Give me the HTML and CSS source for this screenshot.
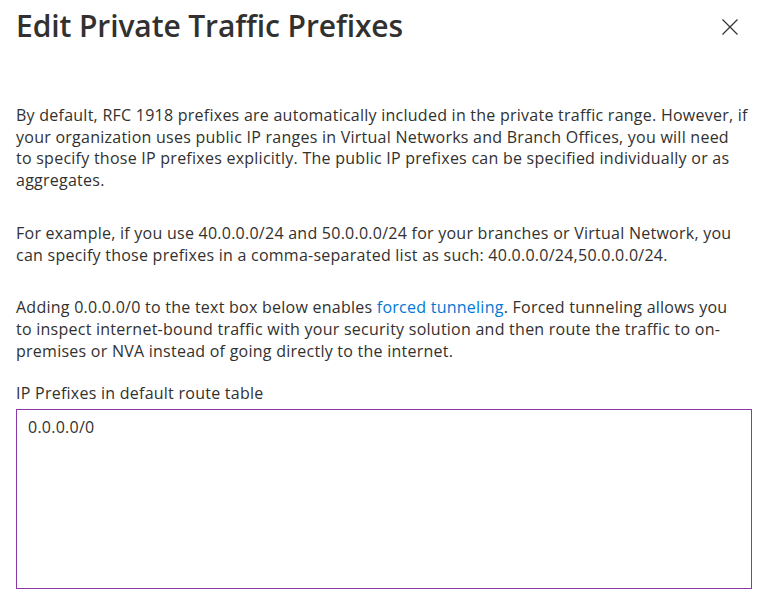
FILE: index.html
```html
<!DOCTYPE html>
<html lang="en">
<head>
<meta charset="utf-8">
<title>Edit Private Traffic Prefixes</title>
<link rel="stylesheet" href="styles.css">
</head>
<body>
<div class="panel">
  <header class="panel-header">
    <h1 class="panel-title">Edit Private Traffic Prefixes</h1>
    <button class="close-btn" aria-label="Close">
      <svg width="16" height="16" viewBox="0 0 16 16"><path d="M0.5 0.5 L15.5 15.5 M15.5 0.5 L0.5 15.5" stroke="#323130" stroke-width="1.2" fill="none"/></svg>
    </button>
  </header>
  <div class="panel-body">
    <p class="desc">By default, RFC 1918 prefixes are automatically included in the private traffic range. However, if your organization uses public IP ranges in Virtual Networks and Branch Offices, you will need to&nbsp;specify those IP prefixes explicitly. The public IP prefixes can be specified individually or as aggregates.</p>
    <p class="desc">For example, if you use 40.0.0.0/24 and 50.0.0.0/24 for your branches or Virtual Network, you can specify those prefixes in a comma-separated list as such: 40.0.0.0/24,50.0.0.0/24.</p>
    <p class="desc">Adding 0.0.0.0/0 to the text box below enables <a class="link" href="#">forced tunneling</a>. Forced tunneling allows you to&nbsp;inspect internet-bound traffic with your security solution and then route the traffic to on-premises or NVA instead of going directly to the internet.</p>
    <label class="field-label" for="prefixes">IP Prefixes in default route table</label>
    <textarea id="prefixes" class="field-input">0.0.0.0/0</textarea>
  </div>
</div>
</body>
</html>
```
FILE: styles.css
```css
html, body {
  margin: 0;
  padding: 0;
  background: #ffffff;
}
body {
  font-family: "Open Sans", "Noto Sans", sans-serif;
  color: #323130;
}
.panel {
  padding: 0 14px 0 16px;
}
.panel-header {
  display: flex;
  justify-content: space-between;
  align-items: flex-start;
  height: 72px;
}
.panel-title {
  margin: 0;
  padding-top: 8px;
  font-size: 30px;
  line-height: 36px;
  font-weight: 600;
  color: #323130;
  letter-spacing: -0.1px;
}
.close-btn {
  border: 0;
  background: transparent;
  padding: 0;
  margin: 19px 14px 0 0;
  width: 16px;
  height: 16px;
  display: flex;
}
.panel-body {
  padding-top: 33px;
  font-size: 16px;
  line-height: 21.7px;
  letter-spacing: 0.25px;
}
.desc {
  margin: 0 0 31px 0;
}
.link {
  color: #0078d4;
  text-decoration: none;
}
.field-label {
  display: block;
  margin-top: -10px;
  margin-bottom: 4px;
}
.field-input {
  display: block;
  box-sizing: border-box;
  width: 100%;
  height: 180px;
  margin: 0;
  border: 1px solid #8a3aa8;
  border-radius: 0;
  padding: 7px 11px;
  font-family: inherit;
  font-size: 16px;
  line-height: 21.7px;
  letter-spacing: 0.25px;
  color: #323130;
  resize: none;
  outline: none;
}
```
